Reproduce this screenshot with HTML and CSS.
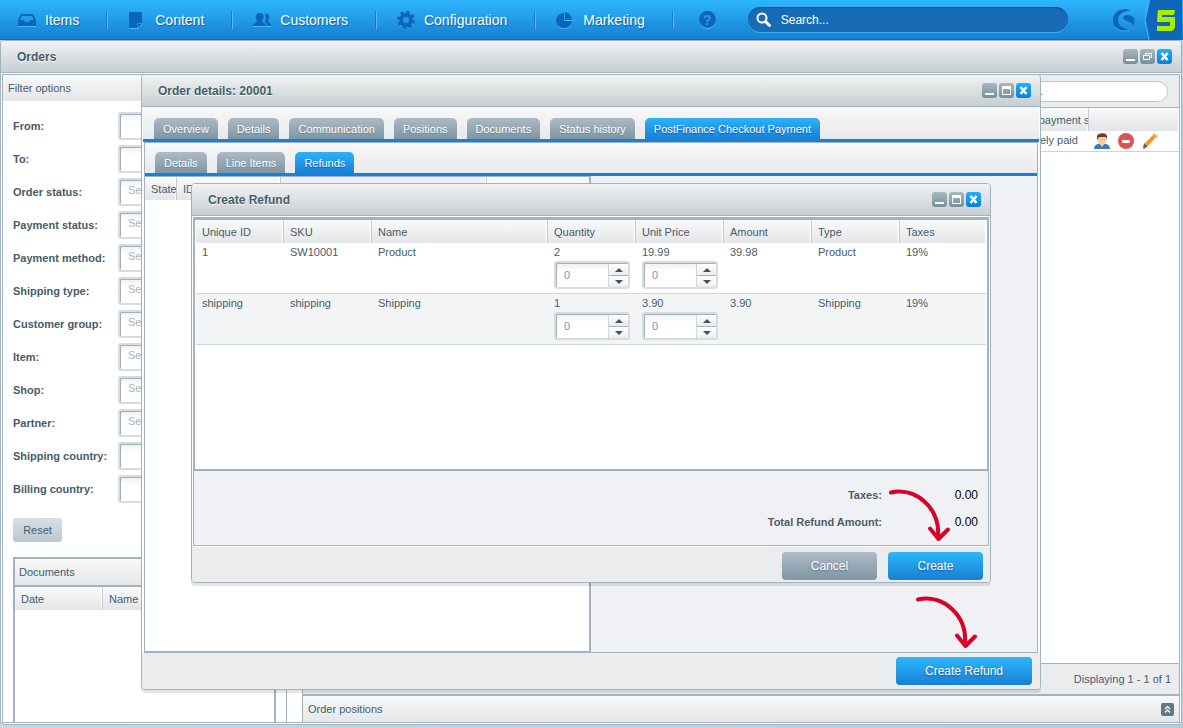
FILE: index.html
```html
<!DOCTYPE html>
<html lang="en">
  <head>
    <meta charset="UTF-8" />
    <meta name="viewport" content="width=device-width, initial-scale=1.0" />
    <title>Orders</title>
    <link rel="stylesheet" href="styles.css">
  </head>
  <body>
    <svg class="sprite" xmlns="http://www.w3.org/2000/svg">
      <symbol id="win-min" viewBox="0 0 15 15"><path d="M3 10h9v2H3z" fill="#fff"/></symbol>
      <symbol id="win-max" viewBox="0 0 15 15"><path d="M3 3h9v9H3zM4 6v5h7V6z" fill="#fff" fill-rule="evenodd"/></symbol>
      <symbol id="win-restore" viewBox="0 0 15 15"><path d="M5.500 6.500v-2h6v4h-2M3.500 6.500h6v4h-6z" fill="none" stroke="#fff"/></symbol>
      <symbol id="win-close" viewBox="0 0 15 15"><path d="M4.500 4l6 7M10.500 4l-6 7" stroke="#fff" stroke-width="2.600"/></symbol>
      <symbol id="arrow" viewBox="0 0 66 60">
        <path d="M4 6.500C29 1 53 22 51 50" fill="none" stroke="#d9002b" stroke-width="4" stroke-linecap="round"/>
        <path d="M43 42.500l8.500 10.500L61 43.500" fill="none" stroke="#d9002b" stroke-width="4" stroke-linecap="round" stroke-linejoin="round"/>
        <path d="M48 48l3 5 5-5z" fill="#d9002b"/>
      </symbol>
    </svg>

    <nav class="topbar">
      <a class="menu-item" href="#">
        <svg width="18" height="18" viewBox="0 0 18 18"><path d="M3 3h12l3 6v6H0V9zM4 5L2 9h4l1 2h4l1-2h4l-2-4z" fill="#0c66b8" fill-rule="evenodd"/><path d="M0 15.500h18" stroke="#4fb9f7"/></svg>
        Items
      </a>
      <a class="menu-item" href="#">
        <svg width="18" height="18" viewBox="0 0 18 18"><path d="M1 1h13v11h-5v5H1z" fill="#0c66b8"/><path d="M10 17v-4h4z" fill="#0c66b8"/><path d="M1 17.500h9l4-4" stroke="#4fb9f7" fill="none"/></svg>
        Content
      </a>
      <a class="menu-item" href="#">
        <svg width="18" height="18" viewBox="0 0 18 18"><path d="M7 2c5 0 4 5 2 8 0 2 4 2 4 5H0c0-3 4-3 4-5C2 7 2 2 7 2z" fill="#0c66b8"/><path d="M12 3c5-1 5 3 3 7 0 1 3 2 3 5h-4c0-3-2-3-2-5 1-2 1-4 0-7z" fill="#0c66b8"/><path d="M0 15.500h18" stroke="#4fb9f7"/></svg>
        Customers
      </a>
      <a class="menu-item" href="#">
        <svg width="18" height="18" viewBox="0 0 18 18"><circle cx="9" cy="10" r="7.500" fill="none" stroke="#4fb9f7" stroke-width="2" stroke-dasharray="3.400 2.490"/><circle cx="9" cy="9" r="5" fill="none" stroke="#0c66b8" stroke-width="4"/><circle cx="9" cy="9" r="7.500" fill="none" stroke="#0c66b8" stroke-width="3" stroke-dasharray="3.400 2.490"/></svg>
        Configuration
      </a>
      <a class="menu-item" href="#">
        <svg width="18" height="18" viewBox="0 0 18 18"><path d="M8 2v8h8a8 7.500 0 1 1-8-8z" fill="#0c66b8"/><path d="M9 1a8 8 0 0 1 7 8H9z" fill="#0c66b8"/><path d="M2 15c3 4 10 4 13-1M9 9.500h8" stroke="#4fb9f7" fill="none"/></svg>
        Marketing
      </a>
      <button class="menu-help" aria-label="Help">?</button>
      <div class="search">
        <svg width="16" height="16" viewBox="0 0 16 16"><circle cx="6" cy="6" r="4.500" fill="none" stroke="#fff" stroke-width="2"/><path d="M9.500 9.500l4 4" stroke="#fff" stroke-width="3" stroke-linecap="round"/></svg>
        <input type="text" placeholder="Search..." aria-label="Search">
      </div>
      <svg class="shop-logo" width="24" height="24" viewBox="0 0 24 24"><path d="M20 3C10-2 1 4 1 12c0 8 8 13 16 10-6-2-11-4-11-10 0-6 7-10 14-9z" fill="#0c66b8"/><path d="M12 8c3-2 7-1 9 1s2 6 0 9c-1-3-3-4-6-5s-5-3-3-5z" fill="#0c66b8"/><path d="M4 20c4 3 8 4 13 2" fill="none" stroke="#3fb0f5"/></svg>
      <svg class="five" width="37" height="40" viewBox="0 0 37 40"><path d="M5 0h32v40H5L1 20z" fill="#0e67b9"/><path d="M4 0L0 20l4 20" fill="none" stroke="#3cb5fa"/><path d="M13 10h17l-1 5H17v2h13v11l-3 3H12v-5h13v-4H12z" fill="#acec00"/></svg>
    </nav>

    <main class="desktop">
      <section class="window orders">
        <header class="window-header">
          <h1>Orders</h1>
          <div class="window-tools">
            <button aria-label="Minimize"><svg><use href="#win-min"/></svg></button>
            <button aria-label="Restore"><svg><use href="#win-restore"/></svg></button>
            <button class="close" aria-label="Close"><svg><use href="#win-close"/></svg></button>
          </div>
        </header>
        <div class="window-body orders-body">
          <aside class="sidebar">
            <div class="panel-title">Filter options</div>
            <form class="filters">
              <label for="from">From:</label><input id="from" type="text">
              <label for="to">To:</label><input id="to" type="text">
              <label for="ostatus">Order status:</label><select id="ostatus"><option>Select...</option></select>
              <label for="pstatus">Payment status:</label><select id="pstatus"><option>Select...</option></select>
              <label for="pmethod">Payment method:</label><select id="pmethod"><option>Select...</option></select>
              <label for="stype">Shipping type:</label><select id="stype"><option>Select...</option></select>
              <label for="cgroup">Customer group:</label><select id="cgroup"><option>Select...</option></select>
              <label for="item">Item:</label><select id="item"><option>Select...</option></select>
              <label for="shop">Shop:</label><select id="shop"><option>Select...</option></select>
              <label for="partner">Partner:</label><select id="partner"><option>Select...</option></select>
              <label for="scountry">Shipping country:</label><input id="scountry" type="text">
              <label for="bcountry">Billing country:</label><input id="bcountry" type="text">
            </form>
            <button class="reset">Reset</button>
            <div class="documents">
              <div class="panel-title">Documents</div>
              <table class="grid">
                <thead><tr><th class="col-date">Date</th><th>Name</th></tr></thead>
              </table>
            </div>
          </aside>
          <div class="order-list">
            <div class="list-toolbar">
              <input type="text" placeholder="Search..." aria-label="Search orders">
            </div>
            <div class="list-rows">
              <table class="grid">
                <thead><tr><th></th><th class="col-payment">Current payment status</th><th class="col-actions"></th></tr></thead>
                <tbody>
                  <tr>
                    <td></td>
                    <td>Completely paid</td>
                    <td>
                      <div class="row-actions">
                        <svg width="16" height="16" viewBox="0 0 16 16"><path d="M0 16c0-4 3-5 5-5h6c2 0 5 1 5 5z" fill="#3f78bd"/><path d="M5 10h6l-3 4z" fill="#f1c49b"/><path d="M4 4h8v4c0 2-2 4-4 4s-4-2-4-4z" fill="#f5cba3"/><path d="M3 7V3c1-3 9-4 10 0v4l-1-3H5z" fill="#6b3a1a"/></svg>
                        <svg width="16" height="16" viewBox="0 0 16 16"><circle cx="8" cy="8" r="8" fill="#e05252"/><rect x="4" y="7" width="8" height="3" rx="1" fill="#fff"/></svg>
                        <svg width="16" height="16" viewBox="0 0 16 16"><path d="M3 10L12 1l3 2-9 10z" fill="#ee9b2d"/><path d="M1 15l1-5 4 3-4 3z" fill="#8a5a35"/><path d="M11 2l1-2 4 3-2 2z" fill="#f3b04d"/></svg>
                      </div>
                    </td>
                  </tr>
                </tbody>
              </table>
            </div>
            <div class="paging">Displaying 1 - 1 of 1</div>
            <div class="panel-title positions">
              Order positions
              <button aria-label="Expand"><svg width="13" height="13" viewBox="0 0 13 13"><path d="M4 6l2.500-2.500L9 6M4 9.500L6.500 7 9 9.500" fill="none" stroke="#fff" stroke-width="1.300"/></svg></button>
            </div>
          </div>
        </div>
      </section>

      <section class="window details">
        <header class="window-header">
          <h1>Order details: 20001</h1>
          <div class="window-tools">
            <button aria-label="Minimize"><svg><use href="#win-min"/></svg></button>
            <button aria-label="Maximize"><svg><use href="#win-max"/></svg></button>
            <button class="close" aria-label="Close"><svg><use href="#win-close"/></svg></button>
          </div>
        </header>
        <div class="tabs">
          <button>Overview</button>
          <button>Details</button>
          <button>Communication</button>
          <button>Positions</button>
          <button>Documents</button>
          <button>Status history</button>
          <button class="active">PostFinance Checkout Payment</button>
        </div>
        <div class="details-body">
          <div class="tabs">
            <button>Details</button>
            <button>Line Items</button>
            <button class="active">Refunds</button>
          </div>
          <div class="refunds">
            <div class="refund-list">
              <table class="grid">
                <thead><tr><th class="col-state">State</th><th class="col-id">ID</th><th class="col-sorted"></th><th></th></tr></thead>
              </table>
            </div>
          </div>
        </div>
        <footer class="window-footer">
          <button class="btn primary wide">Create Refund</button>
        </footer>
      </section>

      <section class="window dialog">
        <header class="window-header">
          <h1>Create Refund</h1>
          <div class="window-tools">
            <button aria-label="Minimize"><svg><use href="#win-min"/></svg></button>
            <button aria-label="Maximize"><svg><use href="#win-max"/></svg></button>
            <button class="close" aria-label="Close"><svg><use href="#win-close"/></svg></button>
          </div>
        </header>
        <div class="window-body dialog-body">
          <div class="line-items">
            <table class="grid">
              <thead>
                <tr><th>Unique ID</th><th>SKU</th><th class="col-name">Name</th><th>Quantity</th><th>Unit Price</th><th>Amount</th><th>Type</th><th>Taxes</th></tr>
              </thead>
              <tbody>
                <tr>
                  <td>1</td>
                  <td>SW10001</td>
                  <td>Product</td>
                  <td>2<div class="spinner"><input type="text" value="0" aria-label="Quantity"><div class="steps"><button aria-label="Up"></button><button class="down" aria-label="Down"></button></div></div></td>
                  <td>19.99<div class="spinner"><input type="text" value="0" aria-label="Unit price"><div class="steps"><button aria-label="Up"></button><button class="down" aria-label="Down"></button></div></div></td>
                  <td>39.98</td>
                  <td>Product</td>
                  <td>19%</td>
                </tr>
                <tr class="alt">
                  <td>shipping</td>
                  <td>shipping</td>
                  <td>Shipping</td>
                  <td>1<div class="spinner"><input type="text" value="0" aria-label="Quantity"><div class="steps"><button aria-label="Up"></button><button class="down" aria-label="Down"></button></div></div></td>
                  <td>3.90<div class="spinner"><input type="text" value="0" aria-label="Unit price"><div class="steps"><button aria-label="Up"></button><button class="down" aria-label="Down"></button></div></div></td>
                  <td>3.90</td>
                  <td>Shipping</td>
                  <td>19%</td>
                </tr>
              </tbody>
            </table>
          </div>
          <dl class="totals">
            <dt>Taxes:</dt><dd>0.00</dd>
            <dt>Total Refund Amount:</dt><dd>0.00</dd>
          </dl>
        </div>
        <footer class="window-footer">
          <button class="btn">Cancel</button>
          <button class="btn primary">Create</button>
        </footer>
      </section>

      <svg class="arrow arrow-create"><use href="#arrow"/></svg>
      <svg class="arrow arrow-refund"><use href="#arrow"/></svg>
    </main>
  </body>
</html>
```

FILE: styles.css
```css
* {
  box-sizing: border-box;
}
body {
  margin: 0;
  height: 100vh;
  display: flex;
  flex-direction: column;
  overflow: hidden;
  font-family: "Liberation Sans", Arial, sans-serif;
  font-size: 11px;
  line-height: 14px;
  color: #475c6a;
}
button,
input,
select {
  font: inherit;
  color: inherit;
  margin: 0;
  padding: 0;
  border: 0;
}
button {
  cursor: pointer;
}
.sprite {
  display: none;
}

/* top menu */
.topbar {
  flex: none;
  height: 40px;
  display: flex;
  align-items: center;
  background: linear-gradient(#2eb6fd, #1580d3);
  border-bottom: 1px solid #1268b1;
}
.menu-item {
  display: flex;
  align-items: center;
  gap: 9px;
  height: 18px;
  padding: 0 28px 0 20px;
  border-right: 1px solid #5bb9f2;
  box-shadow: inset -1px 0 #1a78c4;
  font-size: 14px;
  color: #fff;
  text-decoration: none;
  text-shadow: 1px 1px 1px #0f5fa5;
}
.menu-item:first-child {
  padding-left: 18px;
}
.menu-help {
  width: 17px;
  height: 17px;
  margin: 0 32px 0 25px;
  border-radius: 50%;
  background: #0c66b8;
  box-shadow: 0 1px #4fb9f7;
  color: #2b9be8;
  font-size: 14px;
  font-weight: bold;
}
.search {
  width: 320px;
  height: 25px;
  display: flex;
  align-items: center;
  gap: 9px;
  padding-left: 8px;
  border-radius: 13px;
  background: #186cb6;
  box-shadow: inset 0 1px 1px #10508b, 0 1px #44acf0;
}
.search input {
  flex: 1;
  background: none;
  outline: none;
  font-size: 12px;
}
.search input::placeholder {
  color: #fff;
  opacity: 1;
}
.shop-logo {
  margin: 0 9px 0 auto;
}
.five {
  flex: none;
  margin-right: 1px;
}

/* windows */
.desktop {
  flex: 1;
  min-height: 0;
  position: relative;
  display: flex;
  padding: 0 1px 3px 0;
  background: linear-gradient(90deg, #c5d9e4, #b8cde0);
}
.window {
  display: flex;
  flex-direction: column;
  border: 1px solid #a2b3bf;
  border-radius: 4px;
  background: #fff;
  box-shadow: 0 3px rgba(0, 0, 0, 0.1);
}
.orders {
  flex: 1;
  min-width: 0;
  box-shadow: none;
}
.details {
  position: absolute;
  left: 141px;
  top: 34px;
  width: 900px;
  height: 616px;
}
.dialog {
  position: absolute;
  left: 191px;
  top: 143px;
  width: 800px;
  height: 400px;
}
.window-header {
  flex: none;
  height: 32px;
  display: flex;
  align-items: center;
  justify-content: space-between;
  padding: 0 9px 0 16px;
  border-bottom: 1px solid #a2b3bf;
  border-radius: 3px 3px 0 0;
  background: linear-gradient(#f2f2f1, #c6cfd4);
}
.window-header h1 {
  margin: 0;
  font-size: 12px;
  text-shadow: 0 1px #fff;
}
.window-tools {
  display: flex;
  gap: 2px;
}
.window-tools button {
  width: 15px;
  height: 15px;
  border-radius: 3px;
  background: linear-gradient(#a9b8c2, #788d9b);
}
.window-tools .close {
  background: linear-gradient(#1eb0fc, #0580dc);
}
.window-tools svg {
  display: block;
  width: 15px;
  height: 15px;
}
.window-body {
  flex: 1;
  min-height: 0;
  display: flex;
  margin: 1px;
  border: 1px solid #a2b3bf;
}
.window-footer {
  display: flex;
  align-items: center;
  justify-content: flex-end;
  gap: 11px;
  height: 36px;
  padding: 0 8px;
  background: #ebecee;
  border-radius: 0 0 3px 3px;
}
.dialog .window-footer {
  height: 35px;
  padding: 2px 7px 0;
}
.panel-title {
  height: 26px;
  display: flex;
  align-items: center;
  padding: 0 5px;
  background: linear-gradient(#f8f8f8, #e5e6e8);
}

/* tables */
.grid {
  width: 100%;
  table-layout: fixed;
  border-collapse: separate;
  border-spacing: 0;
}
.grid th {
  height: 23px;
  padding: 0 0 0 6px;
  overflow: hidden;
  white-space: nowrap;
  text-align: left;
  font-weight: normal;
  background: linear-gradient(#fafafa, #e4e5e8);
  border-right: 1px solid #c3ccd2;
  box-shadow: inset -1px 0 #fff;
}
.grid th:last-child {
  border-right: 0;
}
.grid td {
  padding: 2px 0 4px 6px;
  vertical-align: top;
  white-space: nowrap;
  border-bottom: 1px solid #ccd5dc;
}
.grid .alt td {
  background: #f3f4f6;
}

/* filter sidebar */
.sidebar {
  flex: none;
  width: 284px;
  display: flex;
  flex-direction: column;
  border-right: 1px solid #a2b3bf;
}
.sidebar > .panel-title {
  flex: none;
}
.filters {
  display: grid;
  grid-template-columns: 105px 1fr;
  gap: 5px 0;
  align-items: center;
  padding: 11px 10px 15px;
}
.filters label {
  font-weight: bold;
  white-space: nowrap;
}
.filters input,
.filters select {
  width: 100%;
  height: 28px;
  padding: 0 8px 4px;
  border: 2px solid #d6dce1;
  border-radius: 3px;
  box-shadow: inset 1px 1px #9fb0bb;
  background: linear-gradient(#edf0f0, #fff 8px);
  appearance: none;
  color: #a5b4be;
}
.reset {
  flex: none;
  width: 49px;
  height: 24px;
  margin: 0 10px 15px;
  border-radius: 3px;
  background: linear-gradient(#d9e0e6, #bcc7d0);
}
.documents {
  flex: 1;
  margin: 0 10px;
  border: 2px solid #a2b3bf;
  border-bottom: 0;
}
.documents .panel-title {
  height: 28px;
  padding: 0 4px;
  border-bottom: 2px solid #a2b3bf;
}
.col-date {
  width: 88px;
}

/* order list */
.order-list {
  flex: 1;
  min-width: 0;
  display: flex;
  flex-direction: column;
  margin-left: 15px;
  border-left: 1px solid #a2b3bf;
}
.list-toolbar {
  display: flex;
  align-items: center;
  justify-content: flex-end;
  height: 33px;
  padding-right: 11px;
  background: #ebecee;
  border-bottom: 1px solid #a2b3bf;
}
.list-toolbar input {
  width: 182px;
  height: 21px;
  padding: 0 12px;
  border: 1px solid #bac6ce;
  border-radius: 11px;
  background: #fff;
}
.list-rows {
  flex: 1;
}
.col-payment {
  width: 96px;
}
.col-actions {
  width: 90px;
}
.row-actions {
  display: flex;
  gap: 8px;
  height: 14px;
  margin-left: -1px;
}
.row-actions svg {
  flex: none;
}
.paging {
  height: 33px;
  padding: 8px;
  text-align: right;
  background: #ebecee;
  border-top: 1px solid #a2b3bf;
  border-bottom: 2px solid #a2b3bf;
}
.positions {
  justify-content: space-between;
}
.positions button {
  width: 13px;
  height: 13px;
  border-radius: 2px;
  background: #627888;
}
.positions svg {
  display: block;
}

/* tabs */
.tabs {
  flex: none;
  display: flex;
  align-items: flex-end;
  gap: 10px;
  height: 35px;
  margin: 0 1px;
  padding-left: 11px;
  border-bottom: 3px solid #1782d5;
  background: linear-gradient(#f8f8f8, #e8e9eb);
}
.tabs button {
  height: 21px;
  padding: 0 9px;
  border-radius: 5px 5px 0 0;
  background: linear-gradient(#adbbc5, #7e95a4);
  color: #fff;
  text-shadow: 0 1px 1px #6b8090;
}
.tabs .active {
  background: linear-gradient(#2cb2fa, #1781d5);
  text-shadow: 0 1px 1px #0a50c0;
}
.details-body {
  flex: 1;
  min-height: 0;
  display: flex;
  flex-direction: column;
  margin: 0 2px;
  border: 1px solid #a2b3bf;
}
.details-body .tabs {
  height: 33px;
  margin: 0;
  padding-left: 10px;
}
.refunds {
  flex: 1;
  display: flex;
  background: #f0f1f4;
}
.refund-list {
  width: 50%;
  background: #fff;
  border: solid #a2b3bf;
  border-width: 1px 2px 1px 0;
}
.col-state {
  width: 32px;
}
.col-id {
  width: 104px;
}
.grid .col-sorted {
  width: 206px;
  background: #e9f1fa;
}

/* refund dialog */
.dialog-body {
  flex-direction: column;
  background: #f0f1f4;
}
.line-items {
  flex: 1;
  padding: 0 1px;
  background: #fff;
  border: solid #a2b3bf;
  border-width: 2px 1px;
}
.line-items th {
  width: 88px;
}
.line-items .col-name {
  width: 176px;
}
.line-items th:last-child {
  width: auto;
}
.line-items td {
  height: 51px;
}
.spinner {
  display: flex;
  width: 76px;
  height: 28px;
  margin-top: 2px;
  border: 2px solid #d6dce1;
  border-radius: 3px;
  background: linear-gradient(#edf0f0, #fff 8px);
  box-shadow: inset 1px 1px #9fb0bb;
}
.spinner input {
  flex: 1;
  min-width: 0;
  padding-left: 8px;
  background: none;
  color: #7c94a5;
}
.steps {
  width: 20px;
  display: flex;
  flex-direction: column;
  margin-top: 1px;
  border-left: 1px solid #d0d6db;
}
.steps button {
  flex: 1;
  display: flex;
  align-items: center;
  justify-content: center;
  background: linear-gradient(#fff, #ecedef);
}
.steps button::before {
  content: "";
  border: solid transparent;
  border-width: 0 4px 4px;
  border-bottom-color: #44525c;
}
.steps .down {
  border-top: 1px solid #a2b3bf;
}
.steps .down::before {
  border-width: 4px 4px 0;
  border-top-color: #44525c;
}
.totals {
  display: grid;
  grid-template-columns: 1fr 96px;
  align-content: center;
  gap: 13px 0;
  height: 74px;
  margin: 0;
  padding-right: 10px;
  text-align: right;
}
.totals dt {
  font-weight: bold;
  text-shadow: 0 1px #fff;
}
.totals dd {
  margin: 0;
  font-size: 12px;
  color: #000;
}
.btn {
  width: 95px;
  height: 28px;
  border-radius: 4px;
  background: linear-gradient(#aebcc6, #7f96a5);
  color: #fff;
  font-size: 12px;
  text-shadow: 0 1px 2px #5b7080;
}
.btn.primary {
  background: linear-gradient(#2eb6fc, #1680d3);
  text-shadow: 0 1px 2px #0b5aa5;
}
.btn.wide {
  width: 136px;
}

/* arrows pointing at the buttons to press */
.arrow {
  position: absolute;
  width: 66px;
  height: 60px;
  pointer-events: none;
}
.arrow-create {
  left: 887px;
  top: 446px;
}
.arrow-refund {
  left: 914px;
  top: 553px;
}
```
